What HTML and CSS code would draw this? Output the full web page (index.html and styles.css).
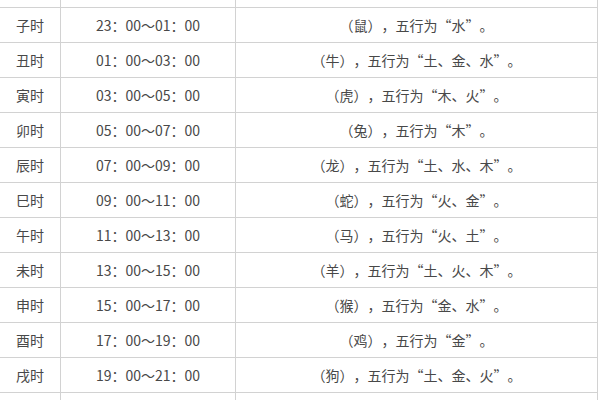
FILE: index.html
```html
<!DOCTYPE html>
<html lang="zh-CN">
<head>
<meta charset="utf-8">
<link rel="stylesheet" href="styles.css">
</head>
<body>
<div class="page">
<table class="tbl">
<colgroup><col class="c1"><col class="c2"><col class="c3"></colgroup>
<tr class="head"><td>时辰</td><td>时间</td><td class="desc">说明</td></tr>
<tr><td>子时</td><td>23：00～01：00</td><td class="desc">（鼠），五行为“水”。</td></tr>
<tr><td>丑时</td><td>01：00～03：00</td><td class="desc">（牛），五行为“土、金、水”。</td></tr>
<tr><td>寅时</td><td>03：00～05：00</td><td class="desc">（虎），五行为“木、火”。</td></tr>
<tr><td>卯时</td><td>05：00～07：00</td><td class="desc">（兔），五行为“木”。</td></tr>
<tr><td>辰时</td><td>07：00～09：00</td><td class="desc">（龙），五行为“土、水、木”。</td></tr>
<tr><td>巳时</td><td>09：00～11：00</td><td class="desc">（蛇），五行为“火、金”。</td></tr>
<tr><td>午时</td><td>11：00～13：00</td><td class="desc">（马），五行为“火、土”。</td></tr>
<tr><td>未时</td><td>13：00～15：00</td><td class="desc">（羊），五行为“土、火、木”。</td></tr>
<tr><td>申时</td><td>15：00～17：00</td><td class="desc">（猴），五行为“金、水”。</td></tr>
<tr><td>酉时</td><td>17：00～19：00</td><td class="desc">（鸡），五行为“金”。</td></tr>
<tr><td>戌时</td><td>19：00～21：00</td><td class="desc">（狗），五行为“土、金、火”。</td></tr>
<tr><td>亥时</td><td>21：00～23：00</td><td class="desc">（猪），五行为“水、木”。</td></tr>
</table>
</div>
</body>
</html>
```
FILE: styles.css
```css
html, body {
  margin: 0;
  padding: 0;
  background: #fff;
}
.page {
  width: 600px;
  height: 400px;
  overflow: hidden;
}
.tbl {
  margin-top: -28px;
  margin-left: -1px;
  border-collapse: collapse;
  table-layout: fixed;
  width: 599px;
  font-family: "Noto Sans CJK SC", "Noto Sans", sans-serif;
  font-size: 14px;
  color: #484848;
  text-spacing-trim: space-all;
}
.c1 { width: 61px; }
.c2 { width: 175px; }
.c3 { width: 362px; }
.tbl td {
  border: 1px solid #d2d2d2;
  height: 34px;
  padding: 0;
  text-align: center;
  vertical-align: middle;
  line-height: 20px;
  white-space: nowrap;
}
.tbl td.desc {
  font-variant-east-asian: full-width;
  text-spacing-trim: space-all;
}
.tbl .head td {
  color: #f3ecd0;
}
```
